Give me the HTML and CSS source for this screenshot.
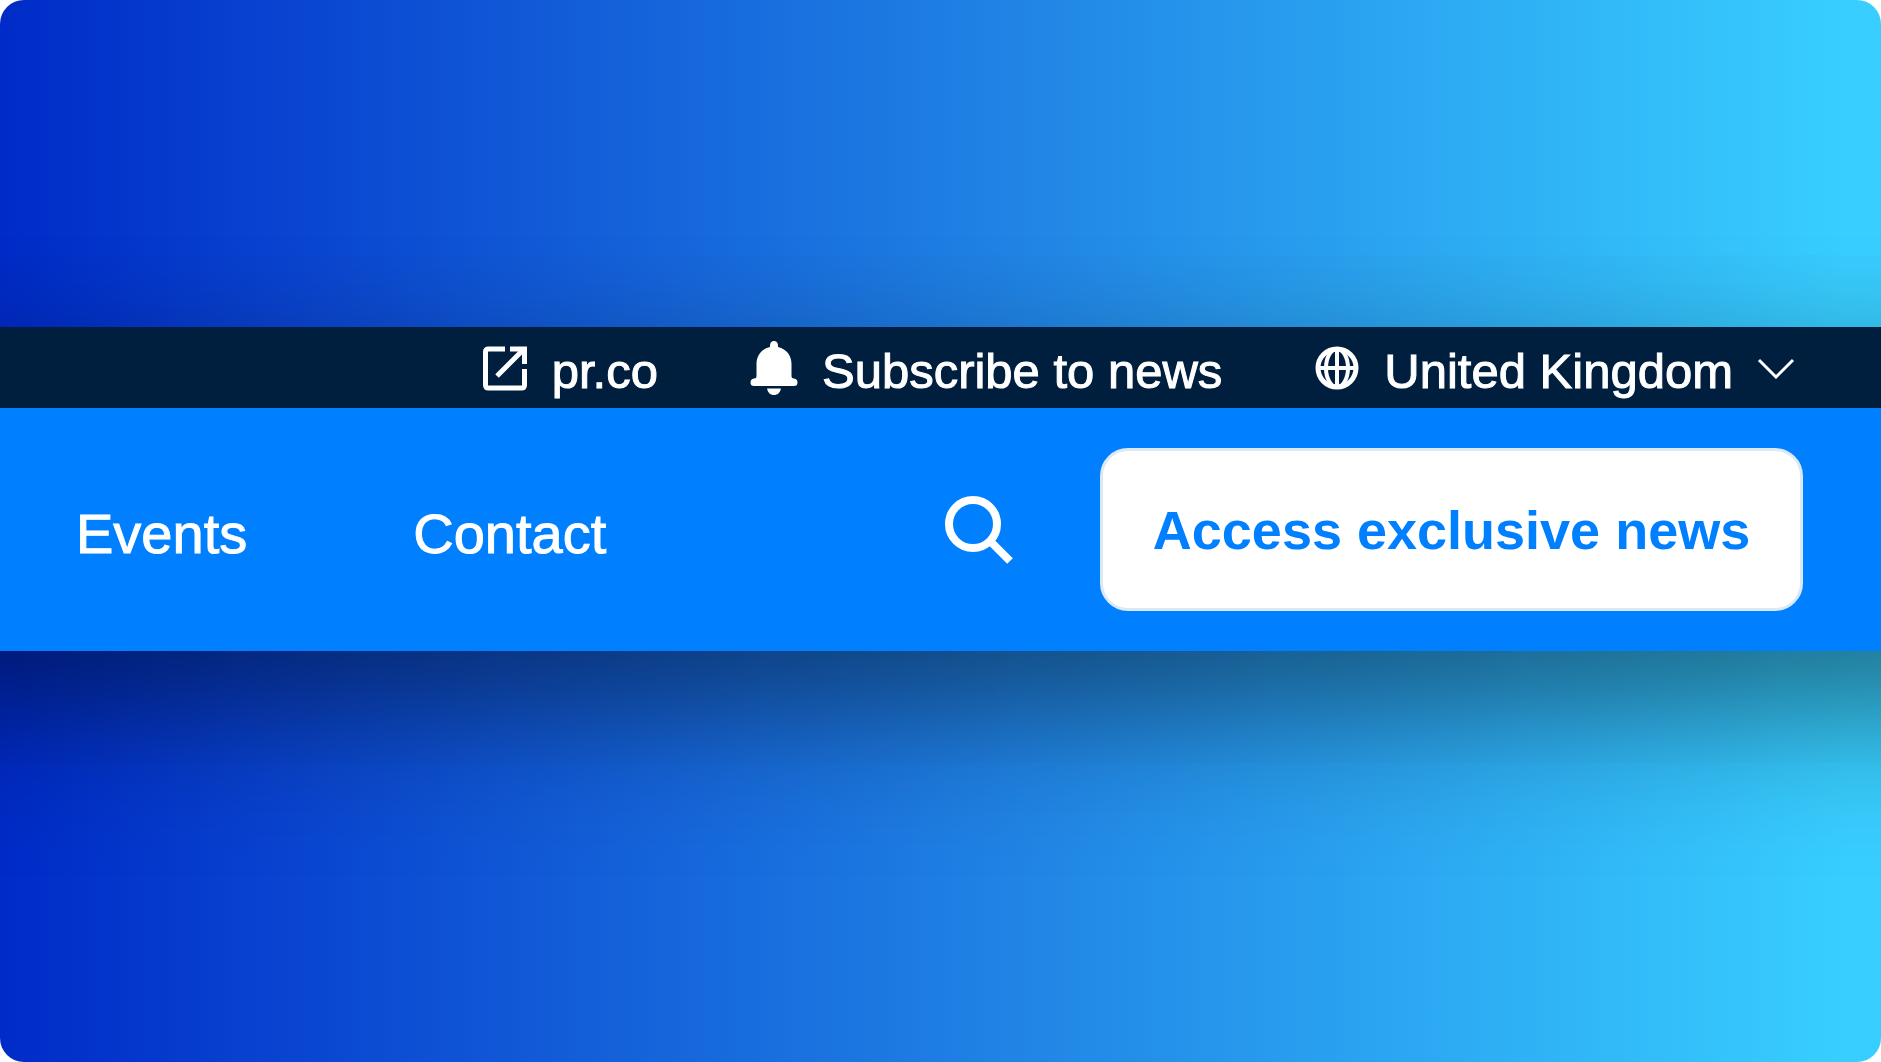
FILE: index.html
```
<!DOCTYPE html>
<html lang="en">
<head>
<meta charset="utf-8">
<title>pr.co newsroom</title>
<link rel="stylesheet" href="styles.css">
</head>
<body>
<div class="stage">
  <header class="site-header">
    <nav class="topbar" aria-label="Utility">
      <a class="util" href="#">
        <svg class="icon-link" viewBox="0 0 46 46" aria-hidden="true"><path d="M23 4H6.500Q3.500 4 3.500 7V40Q3.500 43 6.500 43H39.500Q42.500 43 42.500 40V24M28 4H42.500V19M41 5L15 31"/></svg>
        <span class="util-label">pr.co</span>
      </a>
      <a class="util" href="#">
        <svg class="icon-bell" viewBox="0 0 48 54" aria-hidden="true"><path d="M24 0C21.500 0 20 2 20 4.500V6C11 8 6.500 15 6.500 23V35Q6.500 37.500 4 37.500Q0.500 38 0.500 41.500Q0.500 45 4 45H44Q47.500 45 47.500 41.500Q47.500 38 44 37.500Q41.500 37.500 41.500 35V23C41.500 15 37 8 28 6V4.500C28 2 26.500 0 24 0ZM17 47.500C18 52 20.500 54 24 54S30 52 31 47.500Z"/></svg>
        <span class="util-label">Subscribe to news</span>
      </a>
      <button class="util" type="button">
        <svg class="icon-globe" viewBox="0 0 46 46" aria-hidden="true"><circle cx="23" cy="23" r="19" stroke-width="5"/><ellipse cx="23" cy="23" rx="11" ry="19"/><path d="M23 4V42M4 23H42"/></svg>
        <span class="util-label">United Kingdom</span>
        <svg class="icon-chevron" viewBox="0 0 38 22" aria-hidden="true"><path d="M2 3L19 20L36 3"/></svg>
      </button>
    </nav>
    <nav class="mainbar" aria-label="Main">
      <a class="nav-link" href="#">Events</a>
      <a class="nav-link" href="#">Contact</a>
      <button class="search" type="button" aria-label="Search">
        <svg class="icon-search" viewBox="0 0 68 68" aria-hidden="true"><circle cx="28" cy="28" r="24"/><path d="M45 45L65 65"/></svg>
      </button>
      <button class="access" type="button">Access exclusive news</button>
    </nav>
  </header>
</div>
</body>
</html>
```
FILE: styles.css
```
* { box-sizing: border-box; }
body { margin: 0; background: #fff; font-family: "Liberation Sans", Arial, sans-serif; color: #fff; }
a { color: inherit; text-decoration: none; }
button { font: inherit; color: inherit; background: none; border: 0; padding: 0; }
svg { display: block; flex: none; fill: none; stroke: currentColor; }
.stage { display: flex; align-items: center; min-height: 100vh; padding-bottom: 84px; border-radius: 24px; overflow: hidden; background: linear-gradient(90deg, #002bc8, #1d7ae2 48%, #38ceff 98%); }
/* The header runs past both edges so that its shadow stays even across the page. */
.site-header { flex: 1; margin: 0 -200px; box-shadow: 0 54px 144px rgba(0, 0, 0, 0.5); }
.topbar { display: flex; justify-content: flex-end; gap: 92px; height: 81px; padding: 0 286px 0 200px; background: #001f3f; font-size: 49px; }
.util { display: flex; align-items: center; gap: 24px; white-space: nowrap; }
.util-label { padding-top: 6px; -webkit-text-stroke: 1px currentColor; }
.icon-link { width: 46px; stroke-width: 5; }
.icon-bell { width: 48px; fill: currentColor; stroke: none; }
.icon-globe { width: 46px; stroke-width: 4; }
.icon-chevron { width: 38px; stroke-width: 3; }
.mainbar { display: flex; align-items: center; height: 243px; padding: 0 278px 0 276px; background: #007fff; font-size: 54px; }
.nav-link { margin-right: 166px; padding-top: 8px; font-size: 56px; -webkit-text-stroke: 1px currentColor; }
.search { margin-left: auto; margin-right: 87px; }
.icon-search { width: 68px; stroke-width: 8; }
.access { width: 703px; height: 163px; border: 3px solid #dbe9f5; border-radius: 28px; background: #fff; color: #007fff; font-weight: 700; }
```
